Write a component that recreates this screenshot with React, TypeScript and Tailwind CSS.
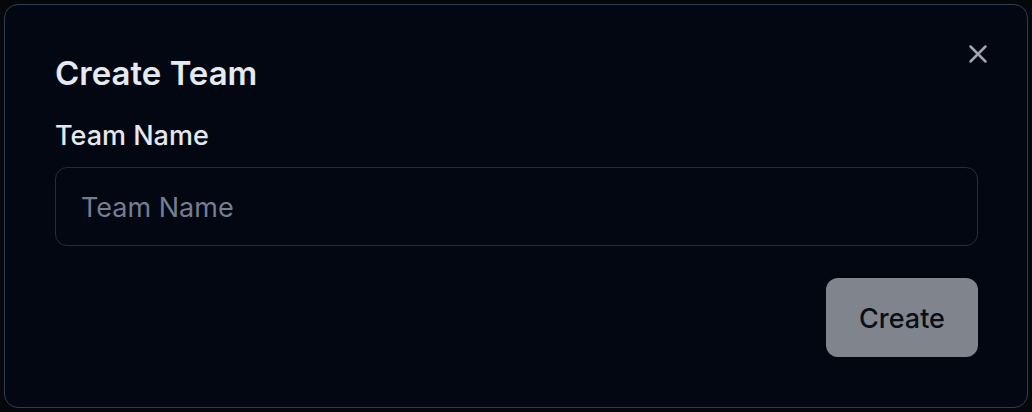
import { X } from "lucide-react";

export default function App() {
	return (
		<div
			className="w-[1032px] h-[412px] bg-[#06070a] p-[4px]"
			style={{ fontFamily: "Inter, 'Noto Sans', sans-serif" }}
		>
			<div className="relative h-[404px] w-[1024px] rounded-[14px] border border-[#2f3b52] bg-[#030712] pl-[50px] pr-[49px] pt-[48px]">
				<button className="absolute right-[34px] top-[34px] text-[#a0a6b1]">
					<X size={30} strokeWidth={2} />
				</button>
				<h2 className="text-[33px] font-semibold leading-[40px] text-[#e5e9f0]">Create Team</h2>
				<label className="mt-[27px] block text-[27px] font-medium leading-[32px] text-[#e4e8ef]">
					Team Name
				</label>
				<input
					className="mt-[15px] block h-[79px] w-full rounded-[12px] border border-[#242d3d] bg-transparent px-[25px] pt-[2px] text-[27px] text-[#e5e7eb] placeholder:text-[#737e92] outline-none"
					placeholder="Team Name"
				/>
				<div className="mt-[32px] flex justify-end">
					<button className="h-[79px] w-[152px] rounded-[12px] bg-[#80858d] pt-[3px] text-[27px] font-medium text-[#0a0e16]">
						Create
					</button>
				</div>
			</div>
		</div>
	);
}
